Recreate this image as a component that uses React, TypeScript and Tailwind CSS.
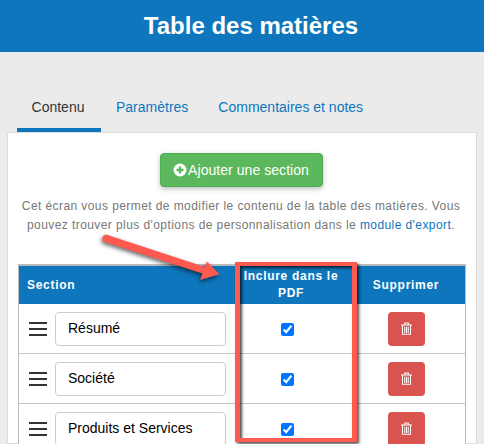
import React from 'react';

const sections = ['Résumé', 'Société', 'Produits et Services'];

function Trash() {
	return (
		<svg width="11" height="13" viewBox="0 0 12 14" fill="none" stroke="white" strokeWidth="1.1">
			<path d="M0 3.1H12M4 3V1h4v2M1.6 3.2V13.4H10.4V3.2M4.1 5V12M6 5V12M7.9 5V12" />
		</svg>
	);
}

function PlusCircle() {
	return (
		<svg width="14" height="14" viewBox="0 0 14 14">
			<circle cx="7" cy="7" r="6.5" fill="white" />
			<path d="M3.5 7H10.5M7 3.5V10.5" stroke="#5cb85c" strokeWidth="2.4" />
		</svg>
	);
}

function Row({ label }: { label: string }) {
	return (
		<div className="grid h-[50px] shrink-0 grid-cols-[216px_112px_1fr] border-b border-[#c4c4c4] bg-white">
			<div className="flex items-center gap-2 pl-[10px]">
				<div className="flex w-[18px] flex-col gap-[4px]">
					<div className="h-[2px] bg-[#333]" />
					<div className="h-[2px] bg-[#333]" />
					<div className="h-[2px] bg-[#333]" />
				</div>
				<div className="flex h-[34px] w-[171px] shrink-0 items-center rounded border border-[#ccc] pl-[12px] text-[14px] text-black">
					{label}
				</div>
			</div>
			<div className="flex items-center justify-center pt-[1px] pr-[7px]">
				<input type="checkbox" defaultChecked className="h-[13px] w-[13px] accent-[#0075ff]" />
			</div>
			<div className="flex items-center justify-center">
				<div className="flex h-[34px] w-[37px] items-center justify-center rounded bg-[#d9534f]">
					<Trash />
				</div>
			</div>
		</div>
	);
}

export default function App() {
	return (
		<div className="relative h-[444px] w-[484px] overflow-hidden bg-[#ebebeb] font-['Liberation_Sans',Arial,sans-serif]">
			<div className="flex h-[52px] items-center justify-center bg-[#0e76bc] pl-[18px] text-[24px] font-bold text-white">
				Table des matières
			</div>

			{/* Tabs */}
			<div className="flex h-[80px] items-end pl-[17px] text-[14px]">
				<div className="flex h-[42px] w-[84px] items-start justify-center border-b-4 border-[#0e76bc] pt-[7px] pr-[2px] text-[#333]">
					Contenu
				</div>
				<div className="flex h-[42px] items-start pt-[7px] pl-[15px] text-[#0e76bc]">Paramètres</div>
				<div className="flex h-[42px] items-start pt-[7px] pl-[30px] text-[#0e76bc]">Commentaires et notes</div>
			</div>

			{/* Panel */}
			<div className="mx-[7px] flex h-[312px] flex-col items-center border border-[#ddd] bg-white px-[10px] pt-[20px]">
				<div className="mr-[2px] flex h-[34px] w-[163px] shrink-0 items-center justify-center gap-[1px] rounded border border-[#4cae4c] bg-[#5cb85c] text-[14px] tracking-[0.05px] text-white shadow-[0_2px_5px_rgba(0,0,0,0.25)]">
					<PlusCircle />
					<span>Ajouter une section</span>
				</div>
				<p className="mt-[10px] mr-[2px] w-full shrink-0 text-center text-[12px] leading-[19px] tracking-[0.42px] whitespace-nowrap text-[#777]">
					Cet écran vous permet de modifier le contenu de la table des matières. Vous
					<br />
					pouvez trouver plus d'options de personnalisation dans le{' '}
					<span className="text-[#0e76bc]">module d'export</span>.
				</p>

				{/* Table */}
				<div className="mt-[29px] flex w-[448px] shrink-0 flex-col border-x border-t-2 border-[#bbb]">
					<div className="grid h-[38px] shrink-0 grid-cols-[216px_112px_1fr] items-center bg-[#0e76bc] text-[12px] leading-[17px] font-bold tracking-[0.7px] text-white">
						<div className="pl-[8px]">Section</div>
						<div className="text-center">
							Inclure dans le
							<br />
							PDF
						</div>
						<div className="text-center">Supprimer</div>
					</div>
					{sections.map((s) => (
						<Row key={s} label={s} />
					))}
				</div>
			</div>

			{/* Annotation: red box and arrow */}
			<div className="absolute top-[262px] left-[235px] h-[180px] w-[122px] border-x-[5px] border-y-[4px] border-[#ff5a4f] shadow-[2px_2px_3px_rgba(0,0,0,0.7),inset_2px_2px_3px_rgba(0,0,0,0.7)]" />
			<svg className="absolute top-[230px] left-[95px] drop-shadow-[-1px_2px_2px_rgba(0,0,0,0.6)]" width="135" height="60" viewBox="95 230 135 60">
				<path
					d="M106 234.5 L205 267 L207 261.5 L219.5 274.3 L200 280 L202.5 273.5 L103 241.5 Q101 236 106 234.5 Z"
					fill="#ff5a4f"
				/>
			</svg>
		</div>
	);
}
